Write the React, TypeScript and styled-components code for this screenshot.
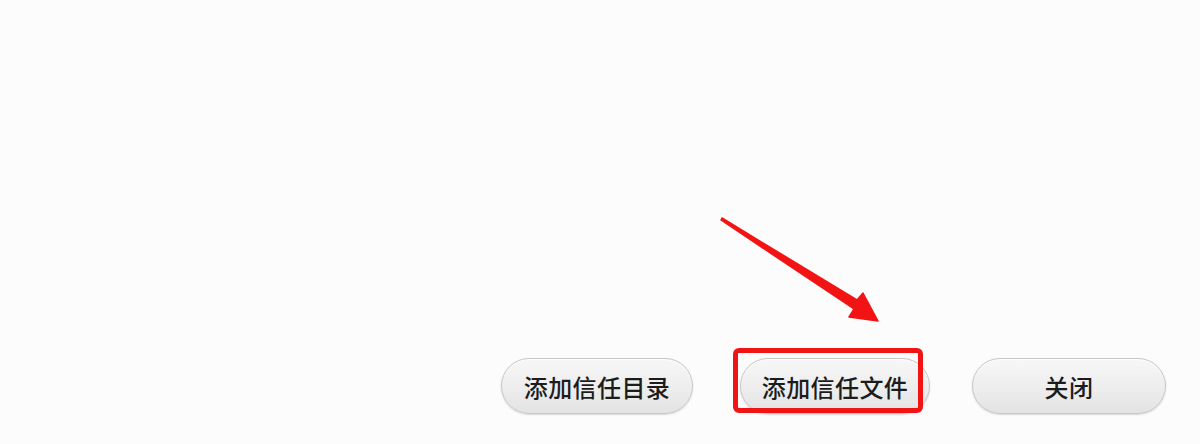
import React from "react";
import styled, { createGlobalStyle } from "styled-components";

const GlobalStyle = createGlobalStyle`
  html, body {
    margin: 0;
    padding: 0;
    background: #fcfcfc;
  }
  body {
    font-family: "Noto Sans CJK SC", "Noto Sans", sans-serif;
  }
`;

const Page = styled.div`
  width: 1200px;
  height: 444px;
  display: flex;
  flex-direction: column;
  justify-content: flex-end;
  background: #fcfcfc;
  overflow: hidden;
`;

const Footer = styled.div`
  display: flex;
  align-items: center;
  justify-content: flex-end;
  padding: 0 34px 30px 0;
`;

const Button = styled.button<{ width: number; gap: number }>`
  width: ${({ width }) => width}px;
  height: 56px;
  margin-left: ${({ gap }) => gap}px;
  border-radius: 28px;
  border: 1px solid #c6c6c6;
  background: linear-gradient(#f7f7f7 0%, #ededed 55%, #e3e3e3 100%);
  box-shadow: 0 1px 2px rgba(0, 0, 0, 0.14), inset 0 1px 0 #ffffff;
  font-family: "Noto Sans CJK SC", "Noto Sans", sans-serif;
  font-size: 24px;
  font-weight: 500;
  color: #1c1c1c;
  letter-spacing: 0.4px;
  display: flex;
  align-items: center;
  justify-content: center;
  padding: 0;
  cursor: pointer;
`;

const Highlight = styled.div`
  position: relative;
  margin-left: 47px;
  display: flex;
`;

const RedFrame = styled.div`
  position: absolute;
  left: -7px;
  top: -10px;
  width: 190px;
  height: 65px;
  box-sizing: border-box;
  border: 5px solid #f01414;
  border-radius: 6px;
  pointer-events: none;
`;

const Arrow = styled.svg`
  position: absolute;
  left: -22px;
  top: -145px;
  width: 170px;
  height: 120px;
  overflow: visible;
  pointer-events: none;
`;

// arrow coords local to the svg (origin at page x 718, y 212)
const ArrowIcon = () => (
  <Arrow viewBox="0 0 170 120">
    <polygon
      points="4,5 139,87 145,80 160,108 131,104 136,96 3,7"
      fill="#f21414"
      stroke="#f21414"
      strokeWidth="1.5"
      strokeLinejoin="round"
    />
  </Arrow>
);

export default function App() {
  return (
    <>
      <GlobalStyle />
      <Page>
        <Footer>
          <Button width={192} gap={0}>添加信任目录</Button>
          <Highlight>
            <Button width={190} gap={0}>添加信任文件</Button>
            <RedFrame />
            <ArrowIcon />
          </Highlight>
          <Button width={194} gap={42}>关闭</Button>
        </Footer>
      </Page>
    </>
  );
}
